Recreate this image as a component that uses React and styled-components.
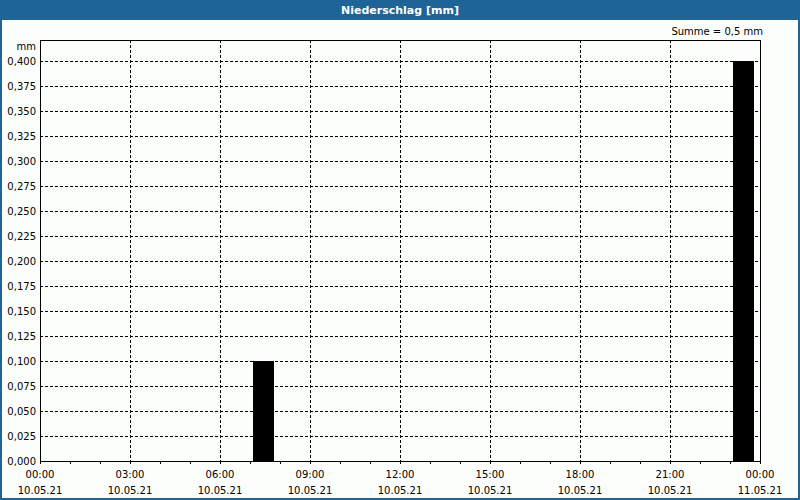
import styled, { createGlobalStyle } from 'styled-components';

const Global = createGlobalStyle`
  body { margin: 0; font-family: "DejaVu Sans", Verdana, sans-serif; }
`;

const Frame = styled.div`
  width: 800px;
  height: 500px;
  box-sizing: border-box;
  border: 2px solid #1e6496;
  border-top: none;
  background: #fcfefc;
  display: flex;
  flex-direction: column;
`;

const Header = styled.div`
  height: 20px;
  margin: 0 -2px;
  background: #1e6496;
  color: #fff;
  font-size: 11px;
  font-weight: bold;
  display: flex;
  align-items: center;
  justify-content: center;
`;

const Plot = styled.svg`
  display: block;
  font-size: 10px;
  font-family: "DejaVu Sans", Verdana, sans-serif;
`;

const L = 38, T = 20, R = 758, B = 441;
const yLabels = Array.from({ length: 17 }, (_, i) => (i * 0.025).toFixed(3).replace('.', ','));
const times = ['00:00', '03:00', '06:00', '09:00', '12:00', '15:00', '18:00', '21:00', '00:00'];
const bars = [{ x: 251, v: 0.1 }, { x: 731, v: 0.4 }];

export default function App() {
  const yOf = v => B - v * 1000;
  return (
    <>
      <Global />
      <Frame>
        <Header>Niederschlag [mm]</Header>
        <Plot width="796" height="478">
          <text x={R + 3} y={T - 5} textAnchor="end">Summe = 0,5 mm</text>
          <text x={L - 4} y={T + 10} textAnchor="end">mm</text>
          {yLabels.map((t, i) => {
            const y = B - i * 25;
            return (
              <g key={t}>
                {i > 0 && <line x1={L} x2={R} y1={y + 0.5} y2={y + 0.5} stroke="#000" strokeDasharray="3 2" />}
                <text x={L - 4} y={y + 4} textAnchor="end">{t}</text>
              </g>
            );
          })}
          {times.map((t, i) => {
            const x = L + i * 90;
            return (
              <g key={i}>
                {i > 0 && i < 8 && <line x1={x + 0.5} x2={x + 0.5} y1={T} y2={B} stroke="#000" strokeDasharray="3 2" />}
                <text x={x} y={B + 17} textAnchor="middle">{t}</text>
                <text x={x} y={B + 33} textAnchor="middle">{i === 8 ? '11.05.21' : '10.05.21'}</text>
              </g>
            );
          })}
          {Array.from({ length: 25 }, (_, i) => (
            <line key={i} x1={L + i * 30 + 0.5} x2={L + i * 30 + 0.5} y1={B} y2={B + 3} stroke="#000" />
          ))}
          {bars.map(b => (
            <rect key={b.x} x={b.x} y={yOf(b.v)} width={21} height={B - yOf(b.v)} fill="#000" />
          ))}
          <rect x={L + 0.5} y={T + 0.5} width={R - L} height={B - T} fill="none" stroke="#000" />
        </Plot>
      </Frame>
    </>
  );
}
